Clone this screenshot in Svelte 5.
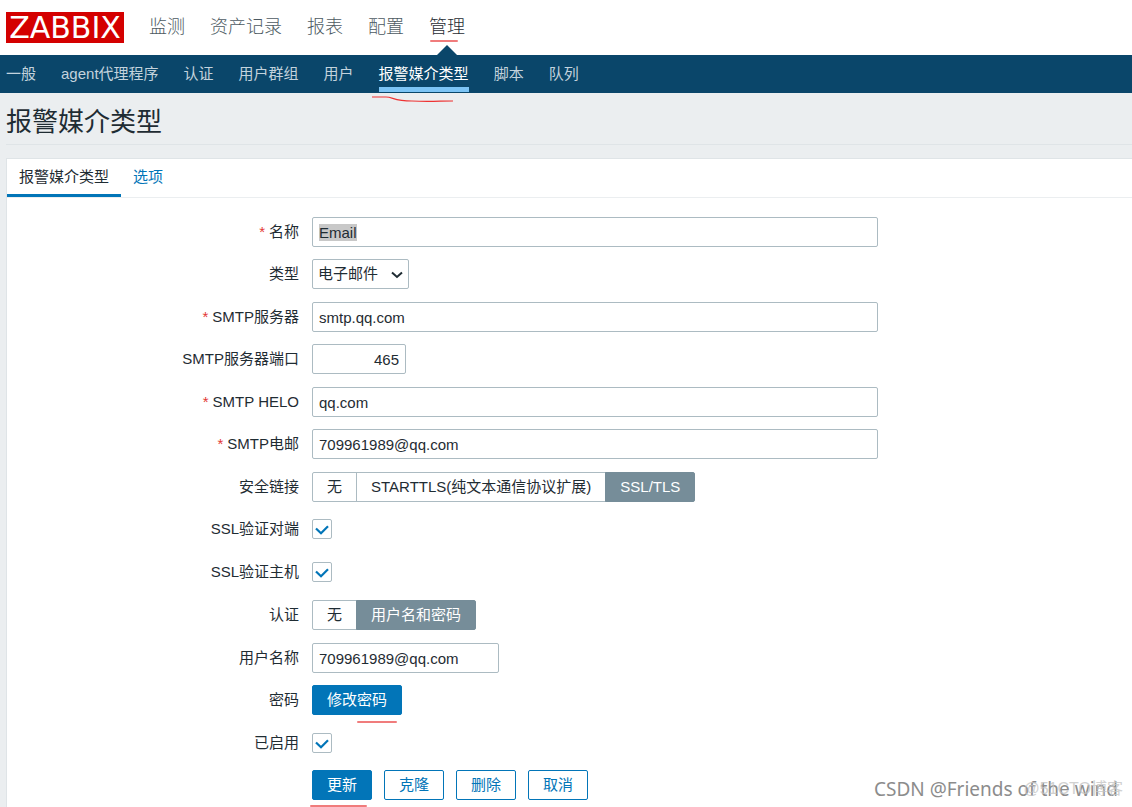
<script lang="ts">
	import { onMount } from 'svelte';

	const mainMenu = ['监测', '资产记录', '报表', '配置', '管理'];
	const subMenu = ['一般', 'agent代理程序', '认证', '用户群组', '用户', '报警媒介类型', '脚本', '队列'];
	const tabs = ['报警媒介类型', '选项'];

	const activeMain = '管理';
	const activeSub = '报警媒介类型';
	let activeTab = $state('报警媒介类型');

	let name = $state('Email');
	let type = $state('email');
	let server = $state('smtp.qq.com');
	let port = $state('465');
	let helo = $state('qq.com');
	let email = $state('709961989@qq.com');
	let security = $state('SSL/TLS');
	let verifyPeer = $state(true);
	let verifyHost = $state(true);
	let auth = $state('用户名和密码');
	let username = $state('709961989@qq.com');
	let enabled = $state(true);

	let nameInput: HTMLInputElement;

	onMount(() => {
		nameInput.focus();
		nameInput.select();
	});
</script>

{#snippet segmented(group: string, options: string[], value: string, onpick: (v: string) => void)}
	<div class="segmented" role="radiogroup" aria-labelledby="{group}-label">
		{#each options as option}
			<label class:checked={option === value}>
				<input type="radio" name={group} value={option} checked={option === value} onchange={() => onpick(option)} />
				{option}
			</label>
		{/each}
	</div>
{/snippet}

{#snippet tick()}
	<svg class="tick" viewBox="0 0 20 20" aria-hidden="true">
		<path d="M4 9.5 L9 14.3 L16 7.3" />
	</svg>
{/snippet}

<div class="page">
	<header>
		<a class="logo" href="#home">ZABBIX</a>
		<nav class="main-nav">
			{#each mainMenu as item}
				<a href="#{item}" class:active={item === activeMain}>
					{item}
					{#if item === activeMain}<span class="mark"></span>{/if}
				</a>
			{/each}
		</nav>
	</header>

	<nav class="sub-nav">
		{#each subMenu as item}
			<a href="#{item}" class:active={item === activeSub}>
				{item}
				{#if item === activeSub}
					<svg class="scribble" viewBox="0 0 82 8" aria-hidden="true">
						<path d="M0 2 H14 C21 2 22 6 40 6 C56 7 68 6 81 6" />
					</svg>
				{/if}
			</a>
		{/each}
	</nav>

	<main>
		<h1>报警媒介类型</h1>

		<div class="panel">
			<div class="tabs">
				{#each tabs as tab}
					<a href="#{tab}" class:active={tab === activeTab} onclick={() => (activeTab = tab)}>{tab}</a>
				{/each}
			</div>

			<form onsubmit={(e) => e.preventDefault()}>
				<div class="row">
					<label class="caption required" for="name">名称</label>
					<input id="name" class="text" type="text" bind:value={name} bind:this={nameInput} />
				</div>
				<div class="row">
					<label class="caption" for="type">类型</label>
					<div class="select">
						<select id="type" bind:value={type}>
							<option value="email">电子邮件</option>
							<option value="script">脚本</option>
							<option value="sms">短信</option>
						</select>
						<svg viewBox="0 0 12 8" aria-hidden="true"><path d="M1 1.5 L6 6 L11 1.5" /></svg>
					</div>
				</div>
				<div class="row">
					<label class="caption required" for="server">SMTP服务器</label>
					<input id="server" class="text" type="text" bind:value={server} />
				</div>
				<div class="row">
					<label class="caption" for="port">SMTP服务器端口</label>
					<input id="port" class="text port" type="text" bind:value={port} />
				</div>
				<div class="row">
					<label class="caption required" for="helo">SMTP HELO</label>
					<input id="helo" class="text" type="text" bind:value={helo} />
				</div>
				<div class="row">
					<label class="caption required" for="email">SMTP电邮</label>
					<input id="email" class="text" type="text" bind:value={email} />
				</div>
				<div class="row">
					<span class="caption" id="security-label">安全链接</span>
					{@render segmented('security', ['无', 'STARTTLS(纯文本通信协议扩展)', 'SSL/TLS'], security, (v) => (security = v))}
				</div>
				<div class="row">
					<label class="caption" for="verify-peer">SSL验证对端</label>
					<div class="check">
						<input id="verify-peer" type="checkbox" bind:checked={verifyPeer} />
						{#if verifyPeer}{@render tick()}{/if}
					</div>
				</div>
				<div class="row group-end">
					<label class="caption" for="verify-host">SSL验证主机</label>
					<div class="check">
						<input id="verify-host" type="checkbox" bind:checked={verifyHost} />
						{#if verifyHost}{@render tick()}{/if}
					</div>
				</div>
				<div class="row">
					<span class="caption" id="auth-label">认证</span>
					{@render segmented('auth', ['无', '用户名和密码'], auth, (v) => (auth = v))}
				</div>
				<div class="row">
					<label class="caption" for="username">用户名称</label>
					<input id="username" class="text username" type="text" bind:value={username} />
				</div>
				<div class="row">
					<label class="caption" for="password">密码</label>
					<button id="password" class="primary" type="button">修改密码<span class="mark"></span></button>
				</div>
				<div class="row">
					<label class="caption" for="enabled">已启用</label>
					<div class="check">
						<input id="enabled" type="checkbox" bind:checked={enabled} />
						{#if enabled}{@render tick()}{/if}
					</div>
				</div>
				<div class="row">
					<div class="actions">
						<button class="primary" type="submit">更新<span class="mark wide"></span></button>
						<button type="button">克隆</button>
						<button type="button">删除</button>
						<button type="button">取消</button>
					</div>
				</div>
			</form>
		</div>
	</main>

	<div class="watermark">CSDN @Friends of the wind</div>
	<div class="watermark faint">@51CTO博客</div>
</div>

<style>
	:global(body) {
		margin: 0;
		background: #ebeef0;
	}

	.page {
		position: relative;
		display: flex;
		flex-direction: column;
		min-height: 100vh;
		font-family: 'Liberation Sans', 'Noto Sans CJK SC', sans-serif;
		font-size: 15px;
		font-weight: 400;
		line-height: 20px;
		color: #1f2c33;
	}

	a {
		color: inherit;
		text-decoration: none;
		white-space: nowrap;
	}

	header {
		display: flex;
		align-items: center;
		gap: 25px;
		height: 55px;
		padding: 0 6px;
		background: #fff;
	}

	.logo {
		width: 118px;
		height: 31px;
		background: #d40000;
		color: #fff;
		font-family: 'DejaVu Sans', sans-serif;
		font-size: 30px;
		line-height: 32px;
		text-align: center;
	}

	.main-nav {
		display: flex;
		gap: 25px;
		color: #4d5a62;
		font-size: 18px;
		font-weight: 300;
		line-height: 55px;
	}

	.main-nav a {
		position: relative;
	}

	.main-nav .active {
		color: #1f2c33;
	}

	.main-nav .active::after {
		content: '';
		position: absolute;
		bottom: 0;
		left: 50%;
		margin-left: -10px;
		border: 10px solid transparent;
		border-top: 0;
		border-bottom-color: #0a466a;
	}

	/* hand-drawn red emphasis lines */
	.mark {
		position: absolute;
		height: 2px;
		border-radius: 1px;
		background: #f07c7c;
	}

	.main-nav .mark {
		left: 1px;
		right: 7px;
		top: 40px;
	}

	.sub-nav {
		display: flex;
		gap: 25px;
		height: 38px;
		padding: 0 6px;
		background: #0a466a;
		color: #c3d3dd;
	}

	.sub-nav a {
		position: relative;
		height: 32px;
		line-height: 38px;
	}

	.sub-nav .active {
		color: #fff;
		border-bottom: 5px solid #7cc4f5;
	}

	.scribble {
		position: absolute;
		left: -7px;
		top: 40px;
		width: 82px;
		height: 8px;
	}

	.scribble path {
		fill: none;
		stroke: #e33;
		stroke-width: 1.2;
	}

	main {
		display: flex;
		flex: 1;
		flex-direction: column;
		padding-left: 6px;
	}

	h1 {
		margin: 0 0 13px;
		padding: 12px 0 5px;
		border-bottom: 1px solid #dfe4e7;
		font-size: 26px;
		font-weight: 400;
		line-height: 34px;
	}

	.panel {
		flex: 1;
		border: solid #dfe4e7;
		border-width: 1px 0 0 1px;
		background: #fff;
	}

	.tabs {
		display: flex;
		border-bottom: 1px solid #ebeef0;
		color: #0275b8;
	}

	.tabs a {
		padding: 1px 12px 0;
		border-bottom: 3px solid transparent;
		line-height: 34px;
	}

	.tabs .active {
		border-bottom-color: #0275b8;
		color: #1f2c33;
	}

	form {
		padding: 19px 0 7px;
	}

	.row {
		display: grid;
		grid-template-columns: 292px minmax(0, 1fr);
		column-gap: 13px;
		margin-bottom: 12px;
	}

	.row:nth-child(even),
	.row.group-end {
		margin-bottom: 13px;
	}

	.row:last-child {
		margin-bottom: 0;
	}

	.caption {
		line-height: 29px;
		text-align: right;
	}

	.required::before {
		content: '*';
		margin-right: 4px;
		color: #e33734;
	}

	input,
	select,
	button {
		box-sizing: border-box;
		margin: 0;
		font: inherit;
		color: inherit;
		outline: none;
	}

	.text {
		width: 100%;
		max-width: 566px;
		height: 30px;
		padding: 0 6px;
		border: 1px solid #acbbc2;
		border-radius: 2px;
		background: #fff;
	}

	.text::selection {
		background: #c8c8c8;
		color: #1f2c33;
	}

	.port {
		max-width: 94px;
		text-align: right;
	}

	.username {
		max-width: 187px;
	}

	.select {
		position: relative;
		justify-self: start;
	}

	.select select {
		display: block;
		width: 97px;
		height: 30px;
		padding: 0 5px;
		appearance: none;
		border: 1px solid #acbbc2;
		border-radius: 2px;
		background: #fff;
	}

	.select svg {
		position: absolute;
		right: 6px;
		top: 12px;
		width: 12px;
		height: 8px;
		pointer-events: none;
	}

	.select path {
		fill: none;
		stroke: #1f2c33;
		stroke-width: 2;
	}

	.segmented {
		display: flex;
	}

	.segmented label {
		position: relative;
		box-sizing: border-box;
		height: 30px;
		padding: 0 14px;
		border: 1px solid #acbbc2;
		line-height: 28px;
		white-space: nowrap;
		cursor: pointer;
	}

	.segmented label + label {
		margin-left: -1px;
	}

	.segmented label:first-child {
		border-radius: 2px 0 0 2px;
	}

	.segmented label:last-child {
		border-radius: 0 2px 2px 0;
	}

	.segmented .checked {
		border-color: #768d99;
		background: #768d99;
		color: #fff;
	}

	.segmented input {
		position: absolute;
		inset: 0;
		opacity: 0;
	}

	.check {
		position: relative;
		width: 20px;
		height: 20px;
		margin: 5px 0;
	}

	.check input {
		display: block;
		width: 20px;
		height: 20px;
		appearance: none;
		border: 1px solid #acbbc2;
		border-radius: 2px;
		background: #fff;
	}

	.tick {
		position: absolute;
		inset: 0;
		pointer-events: none;
	}

	.tick path {
		fill: none;
		stroke: #0275b8;
		stroke-width: 2.2;
	}

	button {
		position: relative;
		justify-self: start;
		height: 30px;
		padding: 0 14px;
		border: 1px solid #0275b8;
		border-radius: 2px;
		background: #fff;
		color: #0275b8;
		cursor: pointer;
	}

	.primary {
		background: #0275b8;
		color: #fff;
	}

	button .mark {
		left: 44px;
		right: 4px;
		top: 35px;
	}

	button .wide {
		left: -3px;
		top: 34px;
	}

	.actions {
		display: flex;
		grid-column: 2;
		gap: 12px;
	}

	.watermark {
		position: absolute;
		right: 14px;
		bottom: 6px;
		color: #8c8c8c;
		font-family: 'Noto Sans', 'Open Sans', sans-serif;
		font-size: 19px;
		line-height: 24px;
		pointer-events: none;
	}

	.faint {
		right: 9px;
		color: #c6c6c6;
		font-family: 'Liberation Sans', 'Noto Sans CJK SC', sans-serif;
		font-size: 16px;
		opacity: 0.8;
	}
</style>
